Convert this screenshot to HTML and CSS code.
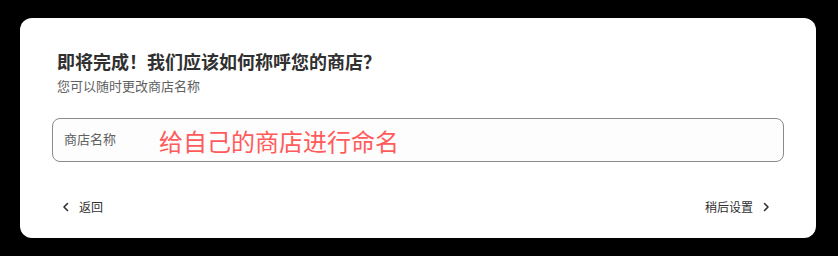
FILE: index.html
```html
<!DOCTYPE html>
<html lang="zh-CN">
<head>
<meta charset="utf-8">
<link rel="stylesheet" href="styles.css">
</head>
<body>
<div class="card">
  <div class="head">
    <h1 class="title">即将完成！我们应该如何称呼您的商店？</h1>
    <p class="sub">您可以随时更改商店名称</p>
  </div>
  <div class="field">
    <span class="label">商店名称</span>
    <span class="placeholder">给自己的商店进行命名</span>
  </div>
  <div class="footer">
    <button class="nav back">
      <svg width="8" height="10" viewBox="0 0 8 10"><path d="M5.5 1.5 L2 5 L5.5 8.5" fill="none" stroke="#303030" stroke-width="1.6" stroke-linecap="round" stroke-linejoin="round"/></svg>
      <span>返回</span>
    </button>
    <button class="nav next">
      <span>稍后设置</span>
      <svg width="8" height="10" viewBox="0 0 8 10"><path d="M2.5 1.5 L6 5 L2.5 8.5" fill="none" stroke="#303030" stroke-width="1.6" stroke-linecap="round" stroke-linejoin="round"/></svg>
    </button>
  </div>
</div>
</body>
</html>
```
FILE: styles.css
```css
html, body {
  margin: 0;
  padding: 0;
  background: #000;
}
body {
  padding: 18px 22px 18px 20px;
  font-family: "Noto Sans CJK SC", "Noto Sans", sans-serif;
}
.card {
  background: #fff;
  border-radius: 12px;
  height: 220px;
  box-sizing: border-box;
  padding: 31px 32px 0 32px;
  display: flex;
  flex-direction: column;
}
.head {
  padding-left: 5px;
}
.title {
  margin: 0;
  font-size: 18px;
  line-height: 24px;
  font-weight: 700;
  color: #303030;
}
.sub {
  margin: 4px 0 0;
  font-size: 13px;
  line-height: 18px;
  color: #616161;
}
.field {
  margin-top: 23px;
  height: 44px;
  box-sizing: border-box;
  border: 1px solid #8a8a8a;
  border-radius: 8px;
  background: #fdfdfd;
  display: flex;
  align-items: center;
  padding: 0 11px;
}
.label {
  font-size: 13px;
  color: #616161;
  width: 95px;
  margin-top: -4px;
}
.placeholder {
  font-size: 24px;
  color: #ff5b5b;
  line-height: 30px;
  margin-top: 2px;
}
.footer {
  margin-top: 36px;
  display: flex;
  justify-content: space-between;
  align-items: center;
}
.nav {
  border: 0;
  background: none;
  font-family: inherit;
  font-size: 12px;
  color: #303030;
  display: flex;
  align-items: center;
  gap: 9px;
  padding: 0;
  cursor: pointer;
}
.back {
  margin-left: 10px;
}
.next {
  margin-right: 14px;
}
```
